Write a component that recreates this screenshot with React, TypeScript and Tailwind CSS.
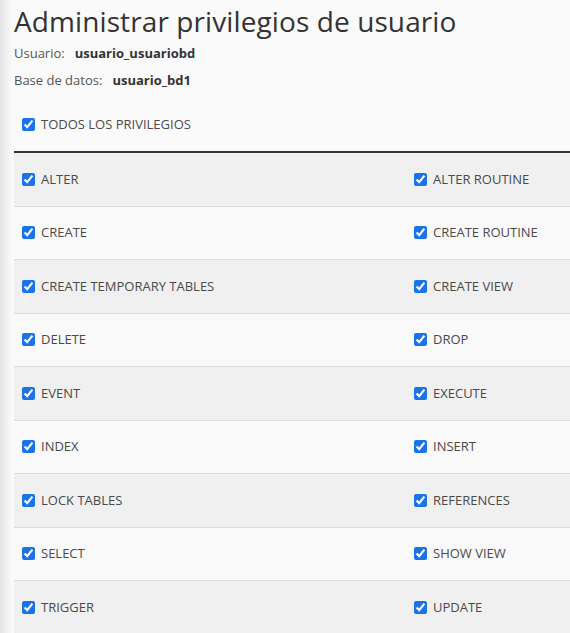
import React from "react";

const rows: [string, string][] = [
  ["ALTER", "ALTER ROUTINE"],
  ["CREATE", "CREATE ROUTINE"],
  ["CREATE TEMPORARY TABLES", "CREATE VIEW"],
  ["DELETE", "DROP"],
  ["EVENT", "EXECUTE"],
  ["INDEX", "INSERT"],
  ["LOCK TABLES", "REFERENCES"],
  ["SELECT", "SHOW VIEW"],
  ["TRIGGER", "UPDATE"],
];

function Check({ label }: { label: string }) {
  return (
    <label className="flex items-center gap-[6px]">
      <input type="checkbox" checked readOnly className="m-0 h-[13px] w-[13px] accent-[#1a73e8]" />
      <span>{label}</span>
    </label>
  );
}

export default function App() {
  return (
    <div
      className="flex min-h-[633px] w-[570px] overflow-hidden bg-[#fafafa] text-[13px] text-[#4a4a4a]"
      style={{ fontFamily: '"Open Sans", "Noto Sans", sans-serif' }}
    >
      <div className="w-[12px] shrink-0 bg-gradient-to-r from-[#e4e4e4] to-[#fafafa]" />
      <div className="shrink-0 pl-[2px]">
        <h1 className="mt-[1px] text-[28px] leading-[40px] font-normal tracking-[0.1px] text-[#333]">
          Administrar privilegios de usuario
        </h1>
        <div className="mt-[3px] flex items-center leading-[18px]">
          <span className="text-[#555]">Usuario:</span>
          <span className="ml-[10px] font-bold text-[#333]">usuario_usuariobd</span>
        </div>
        <div className="mt-[9px] flex items-center leading-[18px]">
          <span className="text-[#555]">Base de datos:</span>
          <span className="ml-[10px] font-bold text-[#333]">usuario_bd1</span>
        </div>
        <div className="mt-[26px] pl-[8px] leading-[18px]">
          <Check label="TODOS LOS PRIVILEGIOS" />
        </div>
        <div className="mt-[18px] w-[784px] border-t-2 border-[#333]">
          {rows.map(([a, b], i) => (
            <div
              key={a}
              className={`grid h-[53.5px] grid-cols-2 items-center border-b border-[#dcdcdc] ${
                i % 2 === 0 ? "bg-[#f0f0f0]" : "bg-[#f9f9f9]"
              }`}
            >
              <div className="pl-[8px]">
                <Check label={a} />
              </div>
              <div className="pl-[8px]">
                <Check label={b} />
              </div>
            </div>
          ))}
        </div>
      </div>
    </div>
  );
}
